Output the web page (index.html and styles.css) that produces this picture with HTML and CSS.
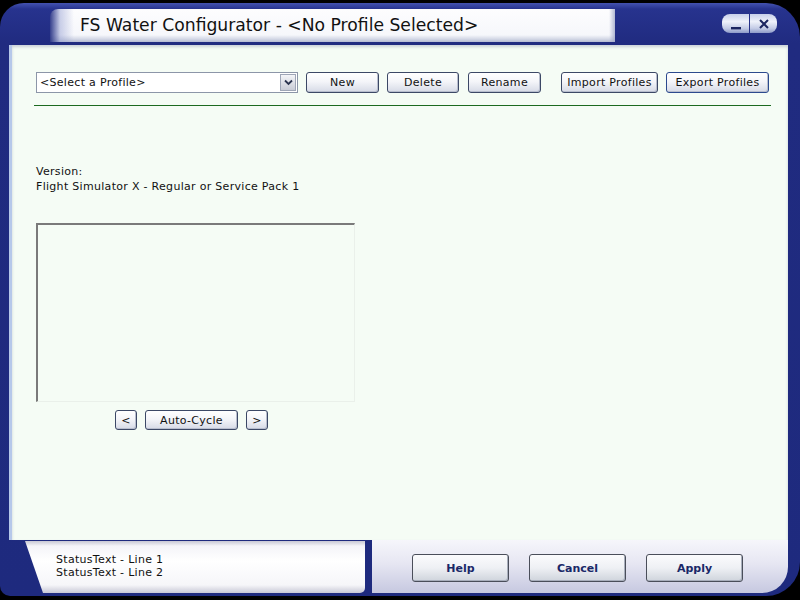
FILE: index.html
```html
<!DOCTYPE html>
<html lang="en">
<head>
  <meta charset="UTF-8">
  <title>FS Water Configurator</title>
  <link rel="stylesheet" href="styles.css">
</head>
<body>

  <div class="window">
    <!-- Title bar -->
    <div class="titlebar">
      <div class="title-tab">
        <span class="title-text">FS Water Configurator - &lt;No Profile Selected&gt;</span>
      </div>
      <div class="win-buttons">
        <button class="win-btn win-min">
          <svg width="12" height="12" viewBox="0 0 12 12"><rect x="1" y="9" width="10" height="2.4" fill="#1b2560"/></svg>
        </button>
        <button class="win-btn win-close">
          <svg width="12" height="12" viewBox="0 0 12 12"><path d="M2 2 L10 10 M10 2 L2 10" stroke="#1b2560" stroke-width="2"/></svg>
        </button>
      </div>
    </div>

    <!-- Main panel -->
    <div class="panel">
      <div class="toolbar">
        <div class="select">
          <span class="select-text">&lt;Select a Profile&gt;</span>
          <span class="select-arrow">
            <svg width="9" height="7" viewBox="0 0 9 7"><path d="M1 1.5 L4.5 5 L8 1.5" fill="none" stroke="#2b3550" stroke-width="1.8"/></svg>
          </span>
        </div>
        <button class="btn btn-new">New</button>
        <button class="btn btn-delete">Delete</button>
        <button class="btn btn-rename">Rename</button>
        <button class="btn btn-import">Import Profiles</button>
        <button class="btn btn-export">Export Profiles</button>
      </div>
      <div class="rule"></div>

      <div class="version">
        <div>Version:</div>
        <div>Flight Simulator X - Regular or Service Pack 1</div>
      </div>

      <div class="preview"></div>
      <div class="preview-nav">
        <button class="btn btn-arrow">&lt;</button>
        <button class="btn btn-cycle">Auto-Cycle</button>
        <button class="btn btn-arrow">&gt;</button>
      </div>
    </div>

    <!-- Footer -->
    <div class="footer">
      <div class="status">
        <div>StatusText - Line 1</div>
        <div>StatusText - Line 2</div>
      </div>
      <div class="actions">
        <button class="action-btn">Help</button>
        <button class="action-btn">Cancel</button>
        <button class="action-btn">Apply</button>
      </div>
    </div>
  </div>

</body>
</html>
```

FILE: styles.css
```css
/* Overall */
body {
  margin: 0;
  padding: 0;
  width: 800px;
  height: 600px;
  background-color: #000;
  font-family: 'DejaVu Sans', Verdana, sans-serif;
  font-size: 11px;
  letter-spacing: 0.3px;
  color: #111;
  overflow: hidden;
}

.window {
  margin-top: 3px;
  height: 593px;
  background: linear-gradient(#4352b0 0, #27338e 6px, #202b80 40px, #1e2a7e 100%);
  border-radius: 24px 34px 34px 10px;
  display: flex;
  flex-direction: column;
  overflow: hidden;
}

/* Title bar */
.titlebar {
  height: 42px;
  display: flex;
  align-items: flex-start;
  padding-left: 50px;
}

.title-tab {
  width: 565px;
  height: 33px;
  margin-top: 6px;
  background:
    linear-gradient(90deg, rgba(32, 43, 128, 0.9) 0, rgba(150, 160, 210, 0.5) 10px, rgba(255, 255, 255, 0) 24px),
    linear-gradient(270deg, rgba(160, 168, 200, 0.8) 0, rgba(255, 255, 255, 0) 6px),
    linear-gradient(#fdfdfe 0, #f6f7fb 26px, #d4d8e6 30px, #b4bad2 33px);
  border-top-left-radius: 8px;
  display: flex;
  align-items: center;
}

.title-text {
  margin-left: 30px;
  margin-top: -2px;
  font-size: 17.2px;
  letter-spacing: 0;
  color: #111;
  white-space: nowrap;
}

.win-buttons {
  display: flex;
  margin-left: 107px;
  margin-top: 11px;
}

.win-btn {
  width: 27px;
  height: 19px;
  border: none;
  padding: 0;
  background: linear-gradient(#c8d0ea, #eef1fa 40%, #c4cce6 75%, #8e9ac8);
  display: flex;
  align-items: center;
  justify-content: center;
}

.win-min {
  border-radius: 8px 0 0 8px;
  margin-right: 1px;
}

.win-close {
  border-radius: 0 8px 8px 0;
}

/* Main panel */
.panel {
  height: 495px;
  margin: 0 12px 0 9px;
  border-left: 3px solid #b6c8ea;
  background-color: #f5fcf5;
  box-shadow: inset 0 2px 3px rgba(120, 130, 160, 0.35);
  padding: 27px 0 0 24px;
  box-sizing: border-box;
}

.toolbar {
  display: flex;
  align-items: center;
  height: 21px;
}

.select {
  width: 262px;
  height: 21px;
  box-sizing: border-box;
  border: 1px solid #8c96a8;
  background-color: #fff;
  display: flex;
  align-items: center;
  justify-content: space-between;
  padding: 0 1px 0 3px;
}

.select-arrow {
  width: 16px;
  height: 17px;
  box-sizing: border-box;
  border: 1px solid #9ea6b6;
  background: linear-gradient(#f4f5f8, #c8ccd6);
  display: flex;
  align-items: center;
  justify-content: center;
}

.btn {
  font-family: 'DejaVu Sans', Verdana, sans-serif;
  font-size: 11px;
  letter-spacing: 0.3px;
  color: #111;
  height: 21px;
  padding: 0;
  border: 1px solid #3c4866;
  border-radius: 3px;
  background: linear-gradient(#ffffff, #f4f5f9 45%, #d6dae6);
  box-shadow: inset -1px -1px 0 #b8bece;
}

.btn-new { width: 73px; margin-left: 8px; }
.btn-delete { width: 72px; margin-left: 8px; }
.btn-rename { width: 73px; margin-left: 9px; }
.btn-import { width: 97px; margin-left: 20px; }
.btn-export { width: 103px; margin-left: 8px; border-color: #2c4a8e; }

.rule {
  width: 737px;
  height: 1px;
  margin: 12px 0 0 -2px;
  background-color: #1c6a20;
}

.version {
  margin-top: 58px;
  line-height: 15px;
}

.preview {
  width: 319px;
  height: 179px;
  margin-top: 29px;
  box-sizing: border-box;
  border-top: 2px solid #7a7a7a;
  border-left: 2px solid #7a7a7a;
  border-right: 1px solid #eaf0ea;
  border-bottom: 1px solid #eaf0ea;
}

.preview-nav {
  display: flex;
  margin: 8px 0 0 79px;
}

.btn-arrow {
  width: 22px;
  height: 20px;
}

.btn-cycle {
  width: 93px;
  height: 20px;
  margin: 0 8px;
}

/* Footer */
.footer {
  height: 56px;
  display: flex;
}

.status {
  width: 340px;
  height: 52px;
  margin: 1px 0 0 25px;
  box-sizing: border-box;
  padding: 12px 0 0 31px;
  background: linear-gradient(#c8c8d4 0, #f4f4f8 5px, #ffffff 20px, #f6f6f9 44px, #c8c8d6 52px);
  clip-path: polygon(0 0, 100% 0, 100% 100%, 18px 100%);
  border-bottom-right-radius: 5px;
  line-height: 13px;
}

.actions {
  flex: 1;
  height: 53px;
  margin-left: 7px;
  margin-right: 12px;
  background: linear-gradient(#f6f6fb, #e6e6f2 45%, #c6c8e0);
  border-bottom-right-radius: 26px;
  display: flex;
  align-items: flex-start;
  gap: 20px;
  padding: 14px 0 0 40px;
  box-sizing: border-box;
}

.action-btn {
  width: 97px;
  height: 28px;
  font-family: 'DejaVu Sans', Verdana, sans-serif;
  font-size: 11px;
  letter-spacing: 0;
  font-weight: bold;
  color: #1a2868;
  border: 1px solid #4a4e5a;
  border-radius: 3px;
  background: linear-gradient(#fbfbfd, #eef0f4 50%, #cfd4dc);
  box-shadow: inset -1px -1px 0 #a8aebc;
}
```
